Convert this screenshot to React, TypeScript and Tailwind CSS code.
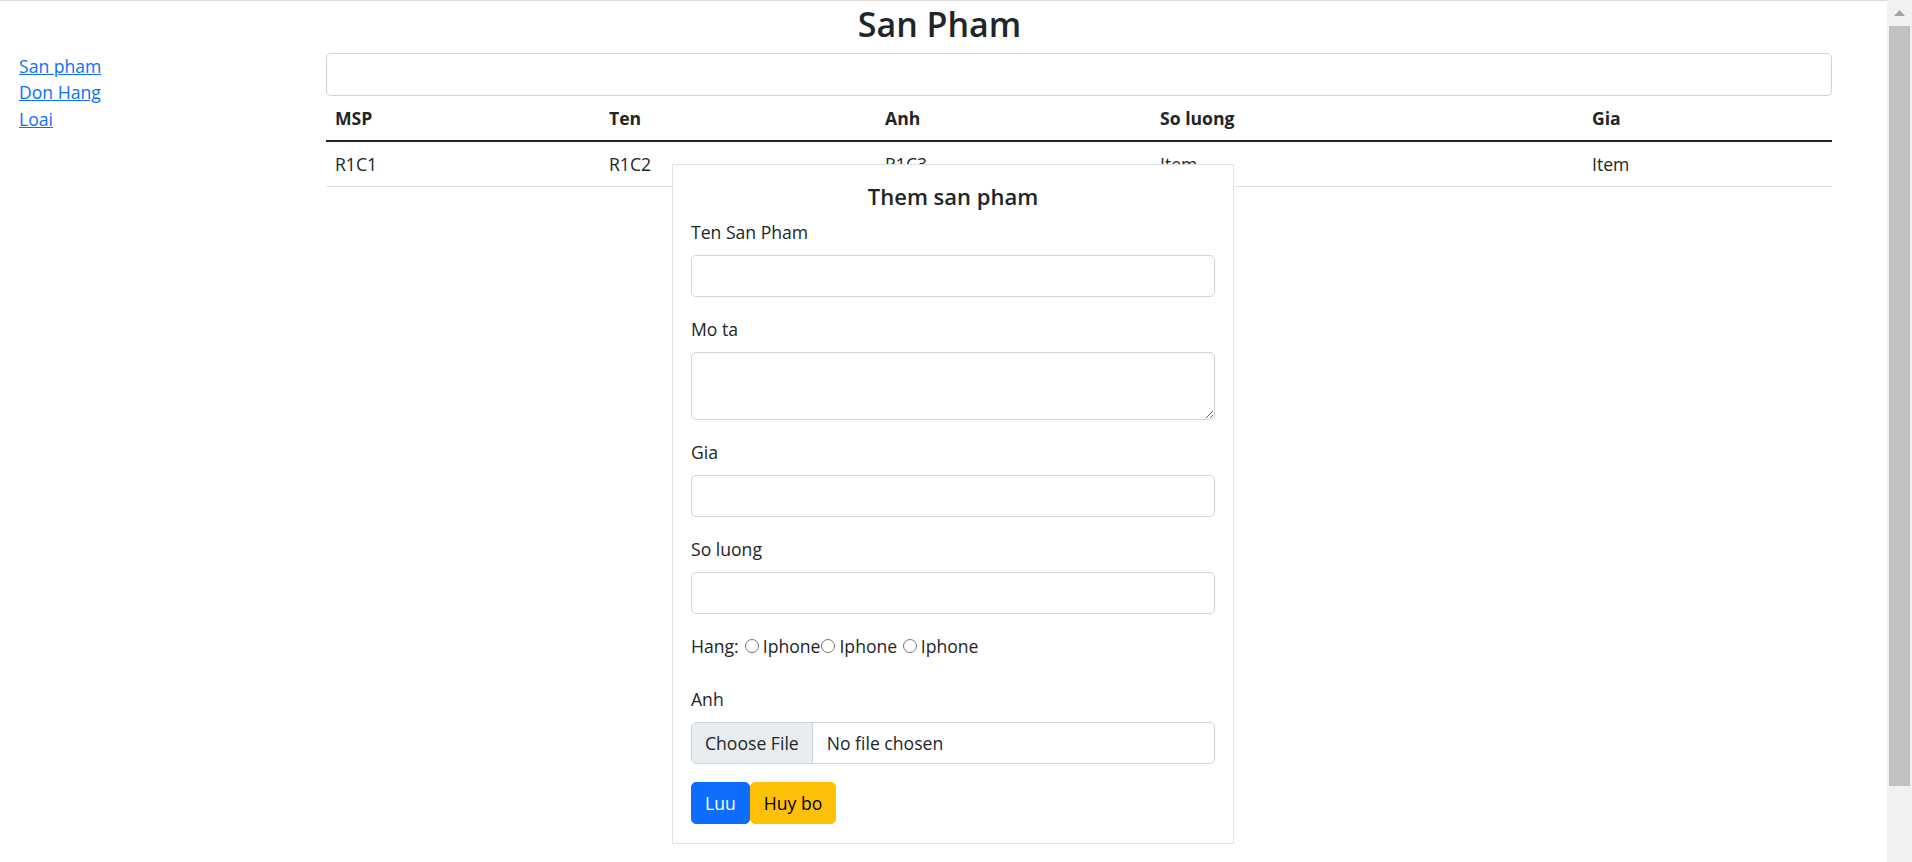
import React from "react";

const font = { fontFamily: '"Open Sans", "Noto Sans", Arial, sans-serif' };

function Field({ label, children, mb = "mb-[19px]" }: { label: string; children: React.ReactNode; mb?: string }) {
  return (
    <div className={`flex flex-col ${mb}`}>
      <label className="h-[26px] leading-[26px] mb-[10px] text-[17.6px] text-[#212529]">{label}</label>
      {children}
    </div>
  );
}

export default function App() {
  const cols = [
    { h: "MSP", w: "w-[274px]", v: "R1C1" },
    { h: "Ten", w: "w-[276px]", v: "R1C2" },
    { h: "Anh", w: "w-[275px]", v: "R1C3" },
    { h: "So luong", w: "w-[432px]", v: "Item" },
    { h: "Gia", w: "w-[249px]", v: "Item" },
  ];
  return (
    <div className="flex w-[1912px] h-[862px] overflow-hidden bg-white text-[#212529]" style={font}>
      <div className="relative w-[1887px] h-[862px] border-t border-[#dcdcdc]">
        <h2 className="h-[46px] leading-[46px] text-center text-[34px] font-semibold text-[#212529] pr-[8px]">San Pham</h2>
        <div className="flex mt-[6px]">
          <nav className="w-[326px] pl-[19px] flex flex-col text-[17.6px] leading-[26.4px]">
            <a href="#" className="text-[#0d6efd] underline w-fit">San pham</a>
            <a href="#" className="text-[#0d6efd] underline w-fit">Don Hang</a>
            <a href="#" className="text-[#0d6efd] underline w-fit">Loai</a>
          </nav>
          <div className="w-[1506px] flex flex-col">
            <input className="h-[43px] w-full border border-[#ced4da] rounded-[5px] bg-white outline-none" />
            <table className="w-[1506px] border-collapse table-fixed text-[17.6px]">
              <colgroup>
                {cols.map((c) => (
                  <col key={c.h} className={c.w} />
                ))}
              </colgroup>
              <thead>
                <tr className="h-[45px]">
                  {cols.map((c) => (
                    <th key={c.h} className="text-left font-bold px-[9px] py-0 leading-[26.4px] border-b-2 border-[#212529]">
                      {c.h}
                    </th>
                  ))}
                </tr>
              </thead>
              <tbody>
                <tr className="h-[45px]">
                  {cols.map((c, i) => (
                    <td key={i} className="px-[9px] py-0 leading-[26.4px] border-b border-[#dee2e6]">
                      {c.v}
                    </td>
                  ))}
                </tr>
              </tbody>
            </table>
          </div>
        </div>

        <div className="absolute left-[672px] top-[163px] w-[562px] h-[680px] bg-white border border-[#dee2e6] px-[18px] pt-[16px] flex flex-col">
          <h4 className="h-[31px] leading-[31px] text-center text-[22px] font-semibold mb-[7px]">Them san pham</h4>
          <Field label="Ten San Pham">
            <input className="h-[42px] w-full border border-[#ced4da] rounded-[5px] outline-none" />
          </Field>
          <Field label="Mo ta">
            <textarea className="h-[68px] w-full border border-[#ced4da] rounded-[5px] outline-none block" />
          </Field>
          <Field label="Gia">
            <input className="h-[42px] w-full border border-[#ced4da] rounded-[5px] outline-none" />
          </Field>
          <Field label="So luong">
            <input className="h-[42px] w-full border border-[#ced4da] rounded-[5px] outline-none" />
          </Field>
          <div className="h-[26px] leading-[26px] text-[17.6px] mb-[27px] flex items-center whitespace-pre">
            <span>Hang:</span>
            <input type="radio" name="hang" className="w-[14px] h-[14px] ml-[6px] mr-[4px] my-0" />
            <span>Iphone</span>
            <input type="radio" name="hang" className="w-[14px] h-[14px] ml-[1px] mr-[4px] my-0" />
            <span>Iphone </span>
            <input type="radio" name="hang" className="w-[14px] h-[14px] ml-[1px] mr-[4px] my-0" />
            <span>Iphone</span>
          </div>
          <div className="flex flex-col mb-[18px]">
            <label className="h-[26px] leading-[26px] mb-[10px] text-[17.6px]">Anh</label>
            <div className="h-[42px] w-full border border-[#ced4da] rounded-[5px] flex items-stretch overflow-hidden text-[17.6px]">
              <span className="bg-[#e9ecef] border-r border-[#ced4da] px-[13px] flex items-center">Choose File</span>
              <span className="ml-[14px] flex items-center">No file chosen</span>
            </div>
          </div>
          <div className="flex text-[17.6px]">
            <button className="h-[42px] px-[13px] bg-[#0d6efd] text-white rounded-[5px] border border-[#0d6efd]">Luu</button>
            <button className="h-[42px] px-[13px] bg-[#ffc107] text-black rounded-[5px] border border-[#ffc107]">Huy bo</button>
          </div>
        </div>
      </div>

      <div className="w-[25px] h-[862px] bg-[#f1f1f1] flex flex-col">
        <div className="h-[26px] flex justify-center pt-[10px]">
          <svg width="11" height="6" viewBox="0 0 11 6">
            <polygon points="5.5,0 11,6 0,6" fill="#a3a3a3" />
          </svg>
        </div>
        <div className="h-[760px] mx-[2px] bg-[#c1c1c1]" />
      </div>
    </div>
  );
}
